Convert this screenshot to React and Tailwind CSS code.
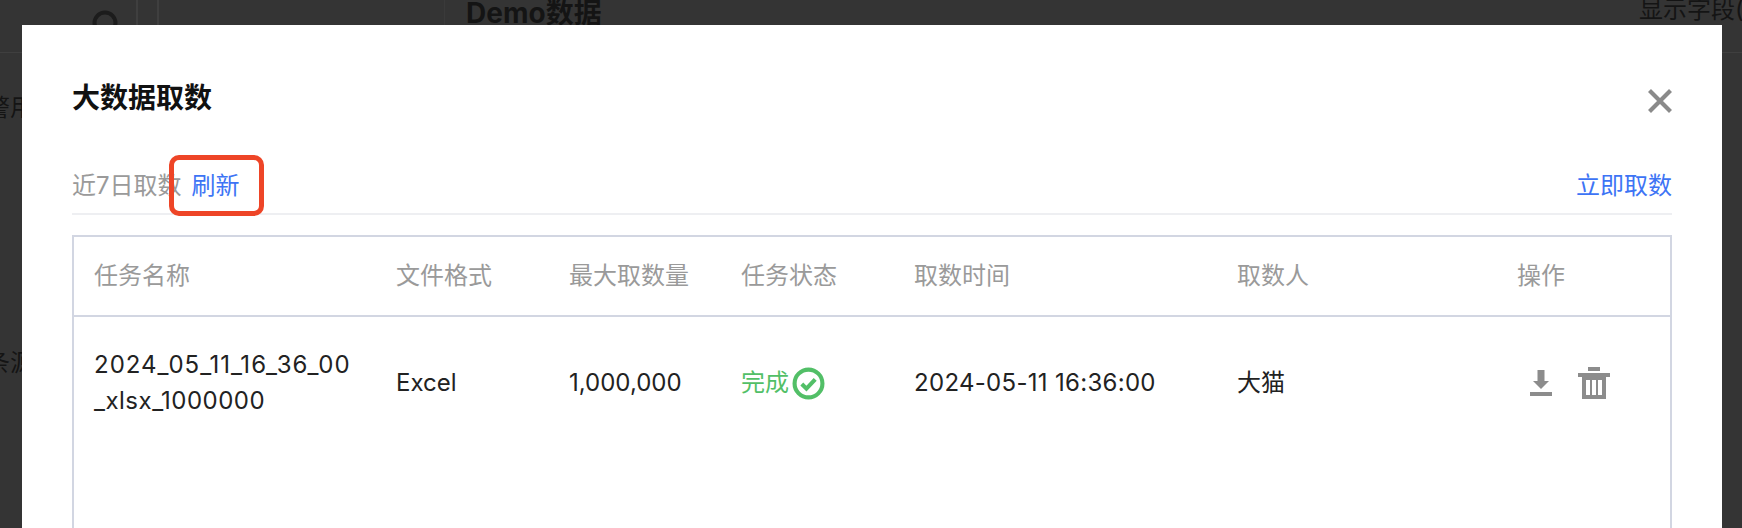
const cols = "grid grid-cols-[302px_173px_172px_173px_323px_280px_1fr]";

function Bg() {
  return (
    <div className="h-[528px] overflow-hidden bg-[#343434] flex flex-col text-[#141414] [font-family:Inter,'Noto_Sans_CJK_SC',sans-serif]">
      <div className="h-[53px] flex border-b border-[#3f3f3f] shrink-0">
        <div className="w-[138px] border-r-2 border-[#3f3f3f] relative shrink-0">
          <svg className="absolute left-[91px] top-[9px]" width="28" height="28" viewBox="0 0 28 28" fill="none"><circle cx="14" cy="14" r="10.5" stroke="#1c1c1c" strokeWidth="4" /></svg>
        </div>
        <div className="w-[21px] border-r-2 border-[#3f3f3f] shrink-0" />
        <div className="w-[286px] border-r border-[#3a3a3a] shrink-0" />
        <div className="pl-[21px] text-[28px] leading-[30px] font-bold whitespace-nowrap -mt-[2px]">Demo数据</div>
        <div className="ml-auto text-[24px] leading-[30px] -mt-[5px] whitespace-nowrap w-[103px] overflow-hidden">显示字段(</div>
      </div>
      <div className="text-[24px] leading-[30px] mt-[40px] -ml-[14px] w-[36px] overflow-hidden whitespace-nowrap">警用</div>
      <div className="text-[24px] leading-[30px] mt-[225px] -ml-[14px] w-[36px] overflow-hidden whitespace-nowrap">条源</div>
    </div>
  );
}

function Dialog() {
  return (
    <div className="absolute left-[22px] w-[1700px] top-[25px] bottom-0 bg-white px-[50px] overflow-hidden [font-family:Inter,'Noto_Sans_CJK_SC',sans-serif]">
      <div className="flex items-start justify-between h-[135px]">
        <h2 className="mt-[54px] text-[28px] leading-[38px] font-bold text-[#111]">大数据取数</h2>
        <svg className="mt-[64px]" width="24" height="24" viewBox="0 0 24 24" fill="none"><path d="M1.5 1.5 L22.5 22.5 M22.5 1.5 L1.5 22.5" stroke="#8a8a8a" strokeWidth="4.2" /></svg>
      </div>
      <div className="flex items-center justify-between h-[55px] border-b-2 border-[#eeeff2] text-[24px] leading-[32px]">
        <div className="flex items-center relative -mt-[2px]">
          <span className="text-[#9a9a9a] whitespace-nowrap">近7日取数</span>
          <span className="ml-[10px] text-[#3d74f5]">刷新</span>
          <span className="absolute left-[97px] top-[-15px] w-[95px] h-[61px] border-[5px] border-[#ee4527] rounded-[10px]" />
        </div>
        <span className="-mt-[2px] text-[#3d74f5]">立即取数</span>
      </div>
      <div className="mt-[20px] h-[400px] border-2 border-[#d2d6e2] text-[24px]">
        <div className={`${cols} h-[80px] items-center border-b-2 border-[#d2d6e2] text-[#9a9a9a] leading-[32px] pl-[20px]`}>
          <span>任务名称</span><span>文件格式</span><span>最大取数量</span><span>任务状态</span><span>取数时间</span><span>取数人</span><span>操作</span>
        </div>
        <div className={`${cols} h-[132px] items-center text-[#222] pl-[20px]`}>
          <span className="leading-[36px] whitespace-nowrap">
            <span className="block tracking-[1px]">2024_05_11_16_36_00</span>
            <span className="block tracking-[0.5px]">_xlsx_1000000</span>
          </span>
          <span>Excel</span>
          <span>1,000,000</span>
          <span className="flex items-center text-[#52bf67]">完成
            <svg className="ml-[3px]" width="33" height="33" viewBox="0 0 32 32" fill="none"><circle cx="16" cy="16" r="13.5" stroke="#52bf67" strokeWidth="4" /><path d="M9.5 16.5 L14 21 L22.5 12" stroke="#52bf67" strokeWidth="4" /></svg>
          </span>
          <span className="whitespace-nowrap tracking-[0.3px]">2024-05-11 16:36:00</span>
          <span>大猫</span>
          <span className="flex items-center">
            <svg className="ml-[13px]" width="22" height="28" viewBox="0 0 22 28" fill="#8c8c8c"><path d="M7.5 1 H14.5 V12 H19 L11 20 L3 12 H7.5 Z" /><rect x="0" y="23" width="22" height="4" /></svg>
            <svg className="ml-[26px]" width="32" height="33" viewBox="0 0 32 33" fill="#8c8c8c"><rect x="10" y="0" width="12" height="4" /><rect x="0" y="6" width="32" height="4" /><path d="M4 10 H28 V32 H4 Z M8 13 V28 H12 V13 Z M14 13 V28 H18 V13 Z M20 13 V28 H24 V13 Z" fillRule="evenodd" /></svg>
          </span>
        </div>
      </div>
    </div>
  );
}

export default function App() {
  return (
    <div className="relative h-[528px] w-[1742px] overflow-hidden">
      <Bg />
      <Dialog />
    </div>
  );
}
